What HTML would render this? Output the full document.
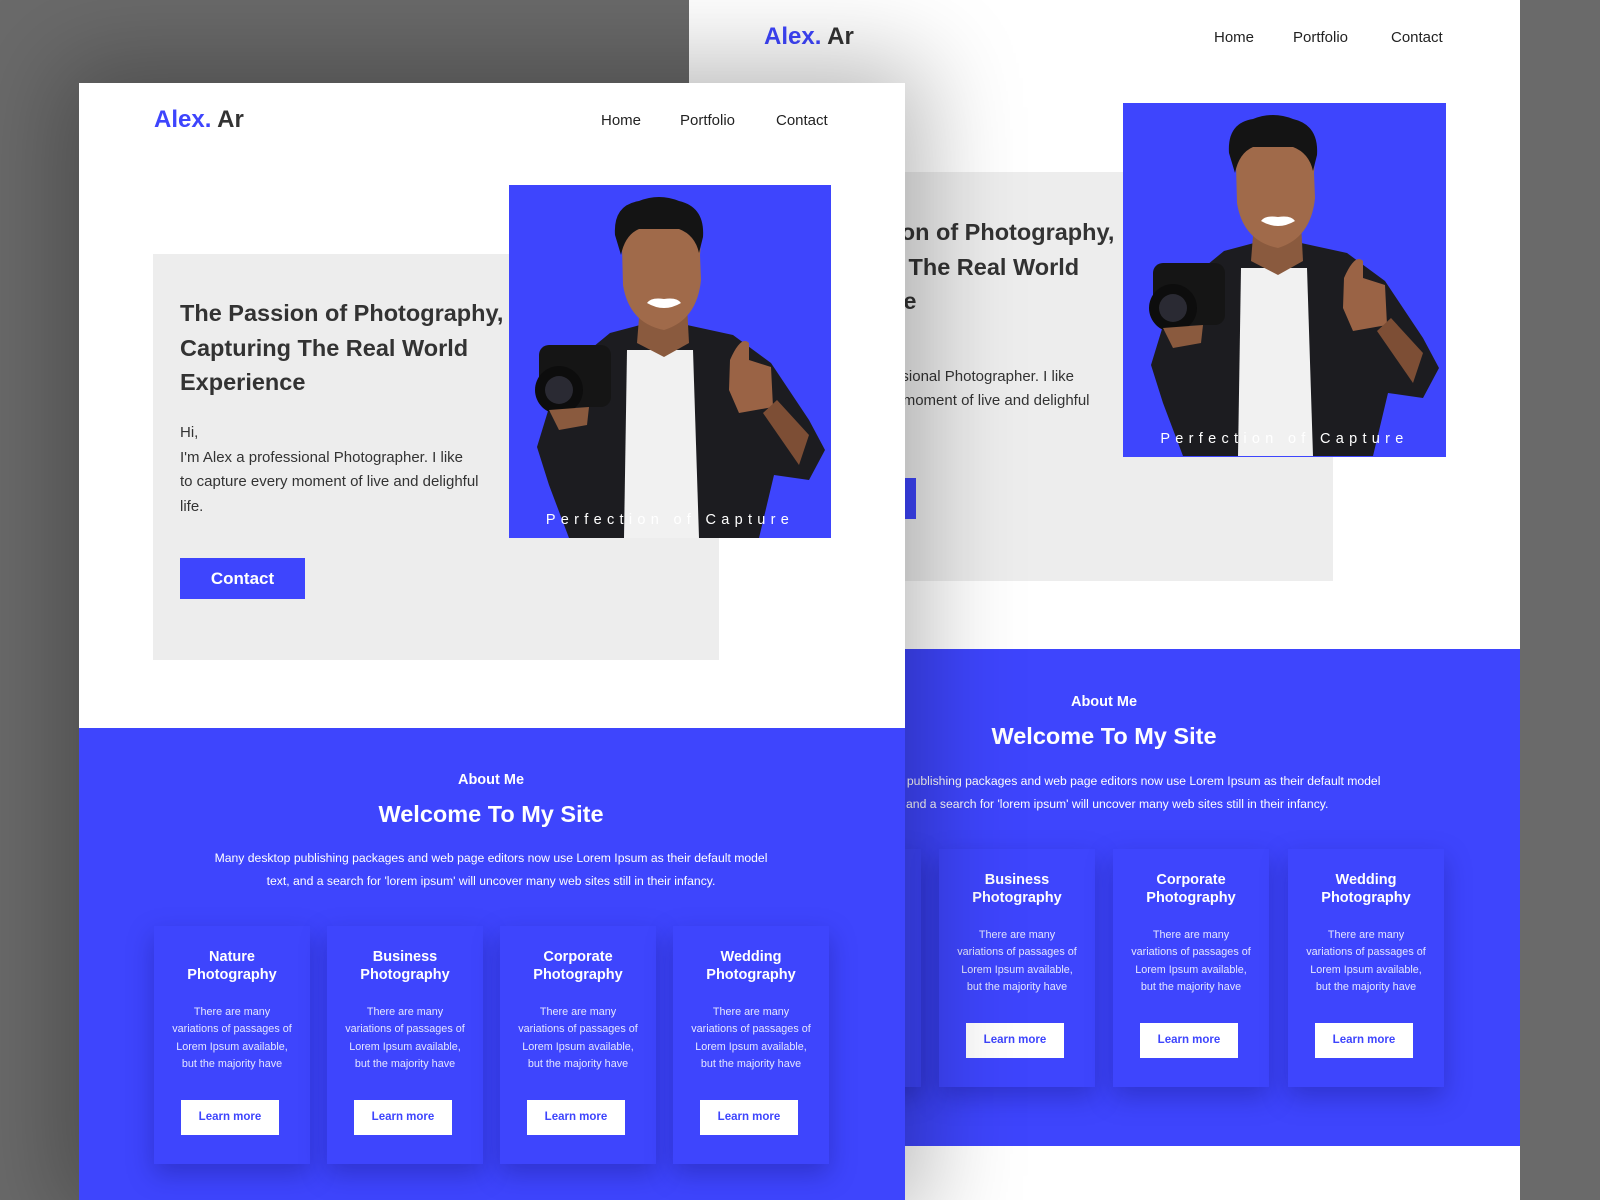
<!DOCTYPE html>
<html><head><meta charset="utf-8"><style>
*{margin:0;padding:0;box-sizing:border-box}
body{width:1600px;height:1200px;background:#6a6a6a;position:relative;overflow:hidden;font-family:"Liberation Sans",Arial,sans-serif}
.abs{position:absolute}
.page{position:absolute;background:#fff;overflow:hidden}
.logo{font-size:24px;font-weight:bold;color:#333;white-space:nowrap}
.logo b{color:#3e45fd}
.nav{font-size:15px;color:#222;white-space:nowrap}
.gray{background:#ededed}
.h1{font-size:23.5px;font-weight:bold;color:#333;line-height:34.5px;white-space:nowrap}
.p{font-size:15px;color:#333;line-height:24.5px;white-space:nowrap}
.btn{background:#3e45fd;color:#fff;font-weight:bold;font-size:17px;text-align:center}
.blue{background:#3e45fd}
.c{text-align:center;color:#fff;white-space:nowrap}
.card{position:absolute;width:156px;height:238px;background:#3e45fd;box-shadow:0 10px 24px rgba(20,20,120,.35)}
.card .t{position:absolute;left:0;right:0;top:22px;text-align:center;color:#fff;font-weight:bold;font-size:14.5px;line-height:18px}
.card .d{position:absolute;left:0;right:0;top:78px;text-align:center;color:#e4e6ff;font-size:10.8px;line-height:17.3px}
.card .b{position:absolute;left:27px;top:174px;width:98px;height:35px;background:#fff;color:#3e45fd;font-weight:bold;font-size:11.5px;line-height:35px;text-align:center}
.photo{position:absolute;background:#3e45fd;overflow:hidden}
.cap{position:absolute;left:0;right:0;bottom:10px;text-align:center;color:#fff;font-size:14.5px;letter-spacing:5.3px;white-space:nowrap}
</style></head><body>

<svg width="0" height="0" style="position:absolute"><defs>
<g id="man">
<path d="M60 353 L40 300 L28 262 L50 190 L101 148 L131 140 L178 140 L224 150 L262 178 L300 235 L316 265 L300 295 L265 290 L250 353 Z" fill="#1c1c20"/>
<path d="M118 165 L184 165 L190 353 L115 353 Z" fill="#f1f1f1"/>
<path d="M131 120 L178 120 L180 158 L155 172 L128 158 Z" fill="#8a5a3e"/>
<path d="M113 62 Q112 40 130 34 L180 34 Q194 42 191 70 L192 95 Q188 135 155 145 Q120 138 114 100 Z" fill="#a06a4a"/>
<path d="M106 50 Q104 20 130 16 Q150 8 170 16 Q196 22 194 52 L190 68 Q186 50 170 44 L130 44 Q116 50 112 70 Z" fill="#141414"/>
<path d="M138 118 Q155 128 172 118 Q168 112 155 114 Q142 112 138 118Z" fill="#fff"/>
<path d="M221 175 Q232 150 240 158 L240 175 L262 182 L264 222 L230 228 L220 205 Z" fill="#9a6345"/>
<path d="M254 228 L290 280 L300 250 L268 215 Z" fill="#7d4e35"/>
<rect x="30" y="160" width="72" height="62" rx="10" fill="#151515"/>
<circle cx="50" cy="205" r="24" fill="#0d0d0d"/>
<circle cx="50" cy="205" r="14" fill="#2a2a33"/>
<path d="M40 225 L80 222 L78 240 L50 245 Z" fill="#8a5a3e"/>
</g></defs></svg>

<!-- back page -->
<div class="page" style="left:689px;top:0;width:831px;height:1200px">
 <div class="abs logo" style="left:75px;top:23px"><b>Alex.</b> Ar</div>
 <div class="abs nav" style="left:525px;top:29px">Home</div>
 <div class="abs nav" style="left:604px;top:29px">Portfolio</div>
 <div class="abs nav" style="left:702px;top:29px">Contact</div>
 <div class="abs gray" style="left:76px;top:172px;width:568px;height:409px"></div>
 <div class="abs h1" style="left:102px;top:215px">The Passion of Photography,<br>Capturing The Real World<br>Experience</div>
 <div class="abs p" style="left:102px;top:340px">Hi,<br>I'm Alex a professional Photographer. I like<br>to capture every moment of live and delighful<br>life.</div>
 <div class="abs btn" style="left:102px;top:478px;width:125px;height:41px;line-height:41px">Contact</div>
 <div class="photo" style="left:434px;top:103px;width:323px;height:354px"><svg width="323" height="354"><use href="#man"/></svg><div class="cap">Perfection of Capture</div></div>
 <div class="abs blue" style="left:0;top:649px;width:831px;height:497px"></div>
 <div class="abs c" style="left:0;width:830px;top:694px;font-size:14.5px;font-weight:bold">About Me</div>
 <div class="abs c" style="left:0;width:830px;top:723px;font-size:23.5px;font-weight:bold">Welcome To My Site</div>
 <div class="abs c" style="left:0;width:830px;top:770px;font-size:12.2px;line-height:22.5px">Many desktop publishing packages and web page editors now use Lorem Ipsum as their default model<br>text, and a search for 'lorem ipsum' will uncover many web sites still in their infancy.</div>
 <div class="card" style="left:76px;top:849px"><div class="t">Nature<br>Photography</div></div>
 <div class="card" style="left:250px;top:849px"><div class="t">Business<br>Photography</div><div class="d">There are many<br>variations of passages of<br>Lorem Ipsum available,<br>but the majority have</div><div class="b">Learn more</div></div>
 <div class="card" style="left:424px;top:849px"><div class="t">Corporate<br>Photography</div><div class="d">There are many<br>variations of passages of<br>Lorem Ipsum available,<br>but the majority have</div><div class="b">Learn more</div></div>
 <div class="card" style="left:599px;top:849px"><div class="t">Wedding<br>Photography</div><div class="d">There are many<br>variations of passages of<br>Lorem Ipsum available,<br>but the majority have</div><div class="b">Learn more</div></div>
</div>

<!-- front page -->
<div class="page" style="left:79px;top:83px;width:826px;height:1117px;box-shadow:0 0 90px 20px rgba(0,0,0,.28)">
 <div class="abs logo" style="left:75px;top:23px"><b>Alex.</b> Ar</div>
 <div class="abs nav" style="left:522px;top:29px">Home</div>
 <div class="abs nav" style="left:601px;top:29px">Portfolio</div>
 <div class="abs nav" style="left:697px;top:29px">Contact</div>
 <div class="abs gray" style="left:74px;top:171px;width:566px;height:406px"></div>
 <div class="abs h1" style="left:101px;top:213px">The Passion of Photography,<br>Capturing The Real World<br>Experience</div>
 <div class="abs p" style="left:101px;top:338px">Hi,<br>I'm Alex a professional Photographer. I like<br>to capture every moment of live and delighful<br>life.</div>
 <div class="abs btn" style="left:101px;top:475px;width:125px;height:41px;line-height:41px">Contact</div>
 <div class="photo" style="left:430px;top:102px;width:322px;height:353px"><svg width="322" height="353"><use href="#man"/></svg><div class="cap">Perfection of Capture</div></div>
 <div class="abs blue" style="left:0;top:645px;width:826px;height:480px"></div>
 <div class="abs c" style="left:0;width:824px;top:689px;font-size:14.5px;font-weight:bold">About Me</div>
 <div class="abs c" style="left:0;width:824px;top:718px;font-size:23.5px;font-weight:bold">Welcome To My Site</div>
 <div class="abs c" style="left:0;width:824px;top:764px;font-size:12.2px;line-height:22.5px">Many desktop publishing packages and web page editors now use Lorem Ipsum as their default model<br>text, and a search for 'lorem ipsum' will uncover many web sites still in their infancy.</div>
 <div class="card" style="left:75px;top:843px"><div class="t">Nature<br>Photography</div><div class="d">There are many<br>variations of passages of<br>Lorem Ipsum available,<br>but the majority have</div><div class="b">Learn more</div></div>
 <div class="card" style="left:248px;top:843px"><div class="t">Business<br>Photography</div><div class="d">There are many<br>variations of passages of<br>Lorem Ipsum available,<br>but the majority have</div><div class="b">Learn more</div></div>
 <div class="card" style="left:421px;top:843px"><div class="t">Corporate<br>Photography</div><div class="d">There are many<br>variations of passages of<br>Lorem Ipsum available,<br>but the majority have</div><div class="b">Learn more</div></div>
 <div class="card" style="left:594px;top:843px"><div class="t">Wedding<br>Photography</div><div class="d">There are many<br>variations of passages of<br>Lorem Ipsum available,<br>but the majority have</div><div class="b">Learn more</div></div>
</div>
</body></html>
